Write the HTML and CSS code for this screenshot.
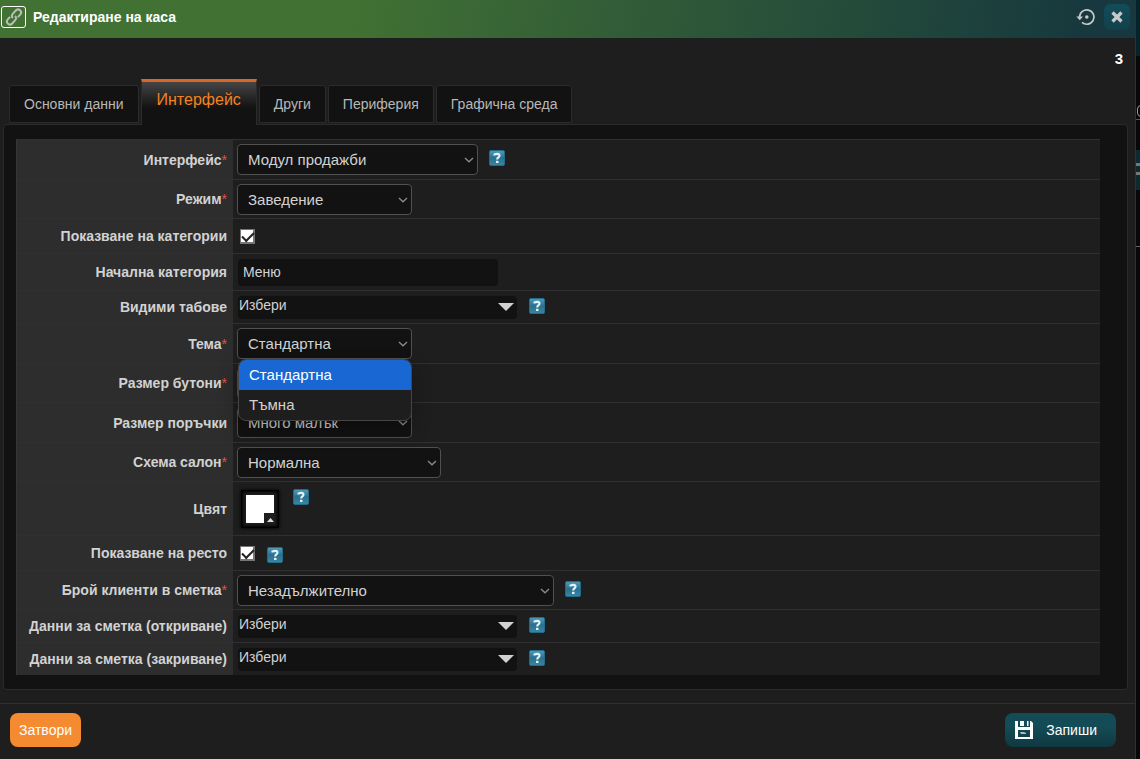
FILE: index.html
```html
<!DOCTYPE html>
<html lang="bg">
<head>
    <meta charset="UTF-8">
    <meta name="viewport" content="width=device-width, initial-scale=1.0">
    <title>Редактиране на каса</title>
    <link rel="stylesheet" href="styles.css">
</head>
<body>
    <svg class="sprite" width="0" height="0" aria-hidden="true">
        <defs>
            <linearGradient id="helpBg" x1="0" y1="0" x2="0" y2="1">
                <stop offset="0" stop-color="#4f9dbb"/>
                <stop offset="0.5" stop-color="#29708e"/>
                <stop offset="1" stop-color="#3a86a5"/>
            </linearGradient>
        </defs>
        <symbol id="help" viewBox="0 0 16 16">
            <rect x="0.5" y="0.5" width="15" height="15" rx="1.5" fill="url(#helpBg)" stroke="#236c89"/>
            <path d="M5.5 5.4V4.4Q6.800 3.900 8.300 3.900Q10.500 3.900 10.500 5.700Q10.500 6.800 9.200 7.500Q8.200 8.100 8.200 9.500" fill="none" stroke="#e4f1f6" stroke-width="2.100"/>
            <rect x="7" y="10.800" width="2.500" height="2.200" fill="#e4f1f6"/>
        </symbol>
        <symbol id="chevron" viewBox="0 0 10 6">
            <path d="M1 1L5 4.8L9 1" fill="none" stroke="#8c8c8c" stroke-width="1.3"/>
        </symbol>
    </svg>

    <form class="dialog">
        <header class="title-bar">
            <a class="link-icon" href="#" aria-label="Връзка">
                <svg width="20" height="20" viewBox="0 0 20 20">
                    <g fill="none" stroke="#b9beb6" stroke-width="2" transform="rotate(-48 10 10)">
                        <path d="M7.500 7H4a3 3 0 0 0 0 6H8.500a3 3 0 0 0 3-3"/>
                        <path d="M12.500 13H16a3 3 0 0 0 0-6H11.500a3 3 0 0 0-3 3"/>
                    </g>
                </svg>
            </a>
            <h1>Редактиране на каса</h1>
            <button type="button" class="history-btn" aria-label="История">
                <svg width="20" height="18" viewBox="0 0 20 18">
                    <path d="M3.6 9A7.2 7.2 0 1 1 6 14.4" fill="none" stroke="#c9c9c9" stroke-width="1.7"/>
                    <path d="M0.4 8.4H7L3.7 12.2Z" fill="#c9c9c9"/>
                    <circle cx="10.8" cy="9" r="1.8" fill="#c9c9c9"/>
                </svg>
            </button>
            <button type="button" class="close-btn" aria-label="Затваряне">
                <svg width="12" height="12" viewBox="0 0 12 12">
                    <path d="M1.5 1.5L10.5 10.5M10.5 1.5L1.5 10.5" stroke="#c9c9c9" stroke-width="3.2"/>
                </svg>
            </button>
        </header>

        <div class="record-number">3</div>

        <nav class="tabs">
            <a href="#">Основни данни</a>
            <a href="#" class="active">Интерфейс</a>
            <a href="#">Други</a>
            <a href="#">Периферия</a>
            <a href="#">Графична среда</a>
        </nav>

        <div class="panel">
            <table class="form-table">
                <tr class="tall-row">
                    <th><label for="interface">Интерфейс<sup>*</sup></label></th>
                    <td><div class="field">
                        <span class="select w-module"><select id="interface"><option>Модул продажби</option></select><svg><use href="#chevron"/></svg></span>
                        <svg class="help"><use href="#help"/></svg>
                    </div></td>
                </tr>
                <tr>
                    <th><label for="mode">Режим<sup>*</sup></label></th>
                    <td><div class="field">
                        <span class="select"><select id="mode"><option>Заведение</option></select><svg><use href="#chevron"/></svg></span>
                    </div></td>
                </tr>
                <tr class="check-row">
                    <th><label for="showCategories">Показване на категории</label></th>
                    <td><div class="field"><input type="checkbox" id="showCategories" checked></div></td>
                </tr>
                <tr class="text-row">
                    <th><label for="startCategory">Начална категория</label></th>
                    <td><div class="field"><input type="text" id="startCategory" value="Меню"></div></td>
                </tr>
                <tr class="multi-row">
                    <th><label for="visibleTabs">Видими табове</label></th>
                    <td><div class="field">
                        <span class="multi"><select id="visibleTabs"><option>Избери</option></select></span>
                        <svg class="help"><use href="#help"/></svg>
                    </div></td>
                </tr>
                <tr class="tall-row">
                    <th><label for="theme">Тема<sup>*</sup></label></th>
                    <td><div class="field">
                        <span class="select"><select id="theme"><option>Стандартна</option><option>Тъмна</option></select><svg><use href="#chevron"/></svg>
                            <ul class="menu">
                                <li class="selected">Стандартна</li>
                                <li>Тъмна</li>
                            </ul>
                        </span>
                    </div></td>
                </tr>
                <tr>
                    <th><label for="buttonSize">Размер бутони<sup>*</sup></label></th>
                    <td><div class="field">
                        <span class="select"><select id="buttonSize"><option></option></select><svg><use href="#chevron"/></svg></span>
                    </div></td>
                </tr>
                <tr class="tall-row">
                    <th><label for="orderSize">Размер поръчки</label></th>
                    <td><div class="field">
                        <span class="select"><select id="orderSize"><option>Много малък</option></select><svg><use href="#chevron"/></svg></span>
                    </div></td>
                </tr>
                <tr>
                    <th><label for="hallScheme">Схема салон<sup>*</sup></label></th>
                    <td><div class="field">
                        <span class="select w-scheme"><select id="hallScheme"><option>Нормална</option></select><svg><use href="#chevron"/></svg></span>
                    </div></td>
                </tr>
                <tr class="color-row">
                    <th><label for="color">Цвят</label></th>
                    <td><div class="field">
                        <button type="button" class="color-btn" id="color" aria-label="Цвят">
                            <svg width="28" height="28" viewBox="0 0 28 28">
                                <path d="M0 0H28V18H18V28H0Z" fill="#fff"/>
                                <path d="M21 27L24.5 23L28 27Z" fill="#ddd"/>
                            </svg>
                        </button>
                        <svg class="help"><use href="#help"/></svg>
                    </div></td>
                </tr>
                <tr class="check-row">
                    <th><label for="showChange">Показване на ресто</label></th>
                    <td><div class="field">
                        <input type="checkbox" id="showChange" checked>
                        <svg class="help"><use href="#help"/></svg>
                    </div></td>
                </tr>
                <tr>
                    <th><label for="clientCount">Брой клиенти в сметка<sup>*</sup></label></th>
                    <td><div class="field">
                        <span class="select w-clients"><select id="clientCount"><option>Незадължително</option></select><svg><use href="#chevron"/></svg></span>
                        <svg class="help"><use href="#help"/></svg>
                    </div></td>
                </tr>
                <tr class="multi-row">
                    <th><label for="openData">Данни за сметка (откриване)</label></th>
                    <td><div class="field">
                        <span class="multi"><select id="openData"><option>Избери</option></select></span>
                        <svg class="help"><use href="#help"/></svg>
                    </div></td>
                </tr>
                <tr class="multi-row">
                    <th><label for="closeData">Данни за сметка (закриване)</label></th>
                    <td><div class="field">
                        <span class="multi"><select id="closeData"><option>Избери</option></select></span>
                        <svg class="help"><use href="#help"/></svg>
                    </div></td>
                </tr>
            </table>
        </div>

        <footer class="actions">
            <button type="button" class="btn btn-close">Затвори</button>
            <button type="submit" class="btn btn-save">
                <svg width="18" height="18" viewBox="0 0 18 18">
                    <path fill="#fff" fill-rule="evenodd" d="M0 0H3V6H15V0H16L18 2V18H0ZM3 9V16H15V9Z"/>
                    <path fill="#fff" d="M5 0H9V5H5ZM12 0H13.500V5H12Z"/>
                    <path fill="#a9bcc0" d="M5 11H9L11 12V13H6Z"/>
                </svg>
                Запиши
            </button>
        </footer>
    </form>

    <!-- страницата под диалога -->
    <div class="backdrop"></div>
</body>
</html>
```
FILE: styles.css
```css
* {
    box-sizing: border-box;
}
body {
    margin: 0;
    min-height: 100vh;
    display: flex;
    background: #0a0a0a;
    color: #d2d2d2;
    font-family: "Liberation Sans", Arial, sans-serif;
    font-size: 15px;
}
button, input, select {
    font: inherit;
    color: inherit;
    margin: 0;
}
.sprite {
    position: absolute;
}
.dialog {
    flex: 1;
    min-width: 0;
    background: #1e1e1e;
    border-right: 1px solid #303030;
}

/* Заглавна лента */
.title-bar {
    display: flex;
    align-items: center;
    height: 38px;
    padding: 0 5px 4px 1px;
    background: linear-gradient(100deg, #427233 0%, #427233 30%, #16383e 96%);
}
.title-bar h1 {
    flex: 1;
    margin: 0 0 0 7px;
    color: #fff;
    font-size: 14px;
}
.link-icon {
    display: flex;
    align-items: center;
    justify-content: center;
    width: 25px;
    height: 22px;
    border: 1px solid #fff;
    border-radius: 3px;
}
.title-bar button {
    display: flex;
    align-items: center;
    justify-content: center;
    padding: 0;
    border: 0;
    background: none;
}
.title-bar .close-btn {
    width: 26px;
    height: 26px;
    margin-left: 8px;
    border-radius: 6px;
    background: linear-gradient(#134c5a, #11414c);
}
.record-number {
    padding: 12px 12px 0 0;
    color: #fff;
    font-weight: bold;
    line-height: 18px;
    text-align: right;
}

/* Табове */
.tabs {
    display: flex;
    align-items: flex-end;
    gap: 2px;
    height: 57px;
    padding: 0 9px 2px;
}
.tabs a {
    height: 38px;
    padding: 0 14px;
    border: 1px solid #2b2b2b;
    border-radius: 3px 3px 0 0;
    background: #121212;
    color: #b8b8b8;
    font-size: 14px;
    line-height: 36px;
    text-decoration: none;
    white-space: nowrap;
}
.tabs .active {
    position: relative;
    z-index: 1;
    height: 46px;
    margin-bottom: -2px;
    padding: 0 15px;
    border-top: 3px solid #d6692a;
    border-bottom: 0;
    border-radius: 0;
    background: linear-gradient(#454545, #121212 60%);
    color: #f58220;
    font-size: 16px;
    line-height: 36px;
}

/* Форма */
.panel {
    margin: -1px 7px 0 3px;
    padding: 14px 27px 14px 12px;
    border: 1px solid #2b2b2b;
    border-radius: 4px;
    background: #121212;
}
.form-table {
    width: 100%;
    border-collapse: separate;
    border-spacing: 0;
}
.form-table th, .form-table td {
    height: 39px;
    padding: 0;
    border-top: 1px solid #303030;
    background: #1e1e1e;
    vertical-align: middle;
}
.form-table th {
    width: 217px;
    padding-right: 6px;
    border-left: 1px solid #363636;
    background: #2d2d2d;
    font-size: 14px;
    text-align: right;
    white-space: nowrap;
}
.form-table td {
    padding-left: 4px;
}
.form-table .tall-row > * {
    height: 40px;
}
.form-table .check-row > * {
    height: 35px;
}
.form-table .text-row > * {
    height: 37px;
}
.form-table .multi-row > * {
    height: 33px;
}
.form-table .color-row > * {
    height: 54px;
}
sup {
    color: #e0524c;
    font-weight: normal;
    font-size: 14px;
    line-height: 0;
    vertical-align: baseline;
}
.field {
    display: flex;
    align-items: center;
    gap: 11px;
}
.help {
    width: 16px;
    height: 16px;
    margin-bottom: 3px;
}
.select {
    position: relative;
    width: 175px;
}
.w-module {
    width: 241px;
}
.w-scheme {
    width: 204px;
}
.w-clients {
    width: 317px;
}
.select select {
    display: block;
    width: 100%;
    height: 31px;
    padding: 0 10px;
    border: 1px solid #505050;
    border-radius: 4px;
    background: #121212;
    appearance: none;
}
.select > svg {
    position: absolute;
    top: 13px;
    right: 4px;
    width: 10px;
    height: 6px;
    pointer-events: none;
}
.menu {
    position: absolute;
    top: 31px;
    left: 1px;
    right: 0;
    z-index: 2;
    margin: 0;
    padding: 0;
    overflow: hidden;
    border: 1px solid #454545;
    border-radius: 8px;
    background: #1e1e1e;
    box-shadow: 0 8px 20px rgba(0, 0, 0, 0.3);
    list-style: none;
}
.menu li {
    padding: 0 10px;
    line-height: 30px;
}
.menu .selected {
    background: #1967d2;
    color: #fff;
}
.multi {
    position: relative;
    width: 279px;
    margin: 0 1px;
}
.multi select {
    display: block;
    width: 100%;
    height: 23px;
    padding: 0 1px 5px;
    border: 0;
    border-radius: 4px;
    background: #121212;
    font-size: 14px;
    appearance: none;
}
.multi::after {
    content: "";
    position: absolute;
    top: 7px;
    right: 3px;
    border: 8px solid transparent;
    border-top-color: #d2d2d2;
    border-bottom: 0;
    pointer-events: none;
}
input[type="text"] {
    width: 260px;
    height: 27px;
    margin-left: 1px;
    padding: 0 5px;
    border: 0;
    border-radius: 4px;
    background: #121212;
    font-size: 14px;
}
input[type="checkbox"] {
    position: relative;
    width: 15px;
    height: 15px;
    margin-left: 3px;
    border: 1px solid #767676;
    border-width: 1px 2px 2px 1px;
    background: #fff;
    appearance: none;
}
input[type="checkbox"]:checked::after {
    content: "";
    position: absolute;
    top: 2px;
    left: 1px;
    width: 10px;
    height: 5px;
    border: solid #222;
    border-width: 0 0 2px 2px;
    transform: rotate(-45deg);
}
.check-row .help {
    margin: 3px 0 0 1px;
}
.color-btn {
    display: flex;
    align-items: center;
    justify-content: center;
    width: 38px;
    height: 38px;
    margin: 0 3px 0 4px;
    padding: 0;
    border: 1px solid #000;
    background: #1e1e1e;
    box-shadow: inset 0 0 3px 1px #000, 0 0 4px #000;
}
.color-row .help {
    align-self: flex-start;
    margin-top: -1px;
}

/* Бутони */
.actions {
    display: flex;
    justify-content: space-between;
    margin-top: 13px;
    padding: 9px 19px 11px 10px;
    border-top: 1px solid #303030;
}
.btn {
    height: 34px;
    padding: 0 9px;
    border: 0;
    border-radius: 8px;
    color: #fff;
    font-size: 14px;
}
.btn-close {
    background: #f58b30;
}
.btn-save {
    display: flex;
    align-items: center;
    gap: 13px;
    padding: 0 19px 0 10px;
    background: linear-gradient(#134c56 40%, #103840);
}

.backdrop {
    width: 4px;
    overflow: hidden;
    padding: 105px 0 0 1px;
    background:
        linear-gradient(#777, #777) 0 163px / 100% 3px no-repeat,
        linear-gradient(#777, #777) 0 172px / 100% 3px no-repeat,
        linear-gradient(#0c2a30, #0c2a30) 0 150px / 100% 40px no-repeat,
        linear-gradient(#555, #555) 0 119px / 100% 1px no-repeat,
        linear-gradient(#666, #666) 0 246px / 100% 1px no-repeat,
        linear-gradient(#06222a, #06222a) 0 0 / 100% 56px no-repeat,
        #080808;
}
.backdrop::before {
    content: "";
    display: block;
    width: 9px;
    height: 10px;
    border: 1px solid #999;
    border-radius: 4px;
}
```
